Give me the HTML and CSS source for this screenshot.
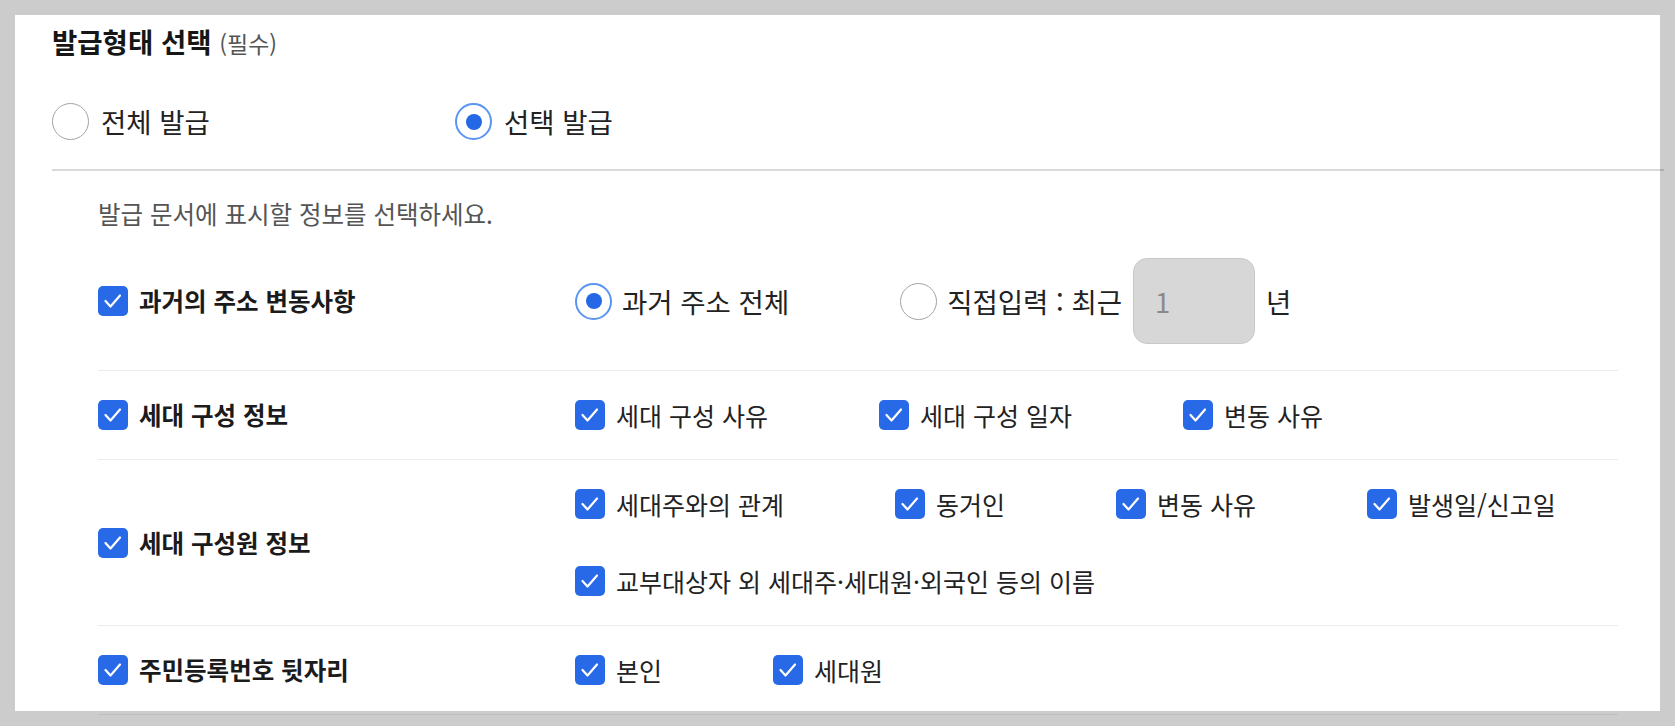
FILE: index.html
```html
<!DOCTYPE html>
<html lang="ko">
<head>
<meta charset="utf-8">
<title>발급형태 선택</title>
<link rel="stylesheet" href="styles.css">
</head>
<body>
<div class="panel">
  <h2 class="title">발급형태 선택 <span class="req">(필수)</span></h2>
  <div class="issue-types">
    <label class="opt opt-top"><span class="radio"></span><span>전체 발급</span></label>
    <label class="opt opt-top"><span class="radio on"></span><span>선택 발급</span></label>
  </div>
  <div class="divider"></div>

  <div class="detail">
    <p class="hint">발급 문서에 표시할 정보를 선택하세요.</p>

    <div class="row row-first">
      <label class="head"><span class="chk"><svg viewBox="0 0 30 30"><path d="M7.5 15l5 5.5L22 9.5"/></svg></span>과거의 주소 변동사항</label>
      <div class="items">
        <label class="opt"><span class="radio on"></span><span>과거 주소 전체</span></label>
        <div class="opt">
          <span class="radio"></span>
          <span>직접입력 : 최근</span>
          <span class="years">1</span>
          <span>년</span>
        </div>
      </div>
    </div>

    <div class="row">
      <label class="head"><span class="chk"><svg viewBox="0 0 30 30"><path d="M7.5 15l5 5.5L22 9.5"/></svg></span>세대 구성 정보</label>
      <div class="items">
        <label class="cb"><span class="chk"><svg viewBox="0 0 30 30"><path d="M7.5 15l5 5.5L22 9.5"/></svg></span>세대 구성 사유</label>
        <label class="cb"><span class="chk"><svg viewBox="0 0 30 30"><path d="M7.5 15l5 5.5L22 9.5"/></svg></span>세대 구성 일자</label>
        <label class="cb"><span class="chk"><svg viewBox="0 0 30 30"><path d="M7.5 15l5 5.5L22 9.5"/></svg></span>변동 사유</label>
      </div>
    </div>

    <div class="row">
      <label class="head"><span class="chk"><svg viewBox="0 0 30 30"><path d="M7.5 15l5 5.5L22 9.5"/></svg></span>세대 구성원 정보</label>
      <div class="items">
        <label class="cb"><span class="chk"><svg viewBox="0 0 30 30"><path d="M7.5 15l5 5.5L22 9.5"/></svg></span>세대주와의 관계</label>
        <label class="cb"><span class="chk"><svg viewBox="0 0 30 30"><path d="M7.5 15l5 5.5L22 9.5"/></svg></span>동거인</label>
        <label class="cb"><span class="chk"><svg viewBox="0 0 30 30"><path d="M7.5 15l5 5.5L22 9.5"/></svg></span>변동 사유</label>
        <label class="cb"><span class="chk"><svg viewBox="0 0 30 30"><path d="M7.5 15l5 5.5L22 9.5"/></svg></span>발생일/신고일</label>
        <label class="cb"><span class="chk"><svg viewBox="0 0 30 30"><path d="M7.5 15l5 5.5L22 9.5"/></svg></span>교부대상자 외 세대주·세대원·외국인 등의 이름</label>
      </div>
    </div>

    <div class="row">
      <label class="head"><span class="chk"><svg viewBox="0 0 30 30"><path d="M7.5 15l5 5.5L22 9.5"/></svg></span>주민등록번호 뒷자리</label>
      <div class="items">
        <label class="cb"><span class="chk"><svg viewBox="0 0 30 30"><path d="M7.5 15l5 5.5L22 9.5"/></svg></span>본인</label>
        <label class="cb"><span class="chk"><svg viewBox="0 0 30 30"><path d="M7.5 15l5 5.5L22 9.5"/></svg></span>세대원</label>
      </div>
    </div>
  </div>
</div>
</body>
</html>
```

FILE: styles.css
```css
* { box-sizing: border-box; }

html, body {
  margin: 0;
  background: #cccccc;
}

body {
  padding: 15px;
  font-family: "Noto Sans CJK KR", "Noto Sans", sans-serif;
  color: #222;
}

.panel {
  background: #fff;
  height: 696px;
  padding: 8px 0 0 37px;
  overflow: visible;
}

.title {
  margin: 0;
  font-size: 27.5px;
  line-height: 36px;
  height: 36px;
  font-weight: 700;
  color: #161616;
}

.req {
  font-size: 23px;
  line-height: 1;
  font-weight: 400;
  color: #555;
}

.issue-types {
  display: flex;
  margin-top: 44px;
  height: 37px;
  align-items: center;
}

.opt {
  display: flex;
  align-items: center;
  gap: 10px;
  font-size: 27.5px;
  line-height: 37px;
  color: #222;
}

.opt-top {
  width: 403px;
  gap: 12px;
}

.radio {
  flex: none;
  width: 37px;
  height: 37px;
  border-radius: 50%;
  border: 1.5px solid #a3a3a3;
  display: flex;
  align-items: center;
  justify-content: center;
}

.radio.on {
  border: 2px solid #5b95f3;
}

.radio.on::after {
  content: "";
  width: 16px;
  height: 16px;
  border-radius: 50%;
  background: #2468e6;
}

.divider {
  margin-top: 29px;
  width: 1612px;
  height: 2px;
  background: rgba(0, 0, 0, 0.15);
}

.detail {
  margin-left: 46px;
  width: 1520px;
}

.hint {
  margin: 27px 0 0;
  font-size: 24.5px;
  line-height: 32px;
  color: #555;
}

.row {
  display: flex;
  align-items: center;
  padding: 29px 0;
  border-bottom: 1px solid rgba(20, 20, 70, 0.08);
}

.row-first {
  padding: 28px 0 26px;
}

.head {
  flex: none;
  width: 477px;
  display: flex;
  align-items: center;
  gap: 11px;
  font-size: 24.5px;
  line-height: 30px;
  font-weight: 700;
  color: #1b1b1b;
}

.items {
  flex: 1;
  display: flex;
  flex-wrap: wrap;
  align-items: center;
  column-gap: 111px;
  row-gap: 47px;
}

.cb {
  display: flex;
  align-items: center;
  gap: 11px;
  font-size: 25px;
  line-height: 30px;
  color: #222;
}

.chk {
  flex: none;
  width: 30px;
  height: 30px;
  border-radius: 5px;
  background: #2869e8;
  display: flex;
}

.chk svg {
  width: 30px;
  height: 30px;
}

.chk path {
  fill: none;
  stroke: #fff;
  stroke-width: 2.2;
  stroke-linecap: round;
  stroke-linejoin: round;
}

.years {
  width: 122px;
  height: 86px;
  margin: 0 1px;
  border: 1px solid #c9c9c9;
  border-radius: 14px;
  background: #d7d7d7;
  color: #8a8a8a;
  padding-left: 21px;
  display: flex;
  align-items: center;
}
```
